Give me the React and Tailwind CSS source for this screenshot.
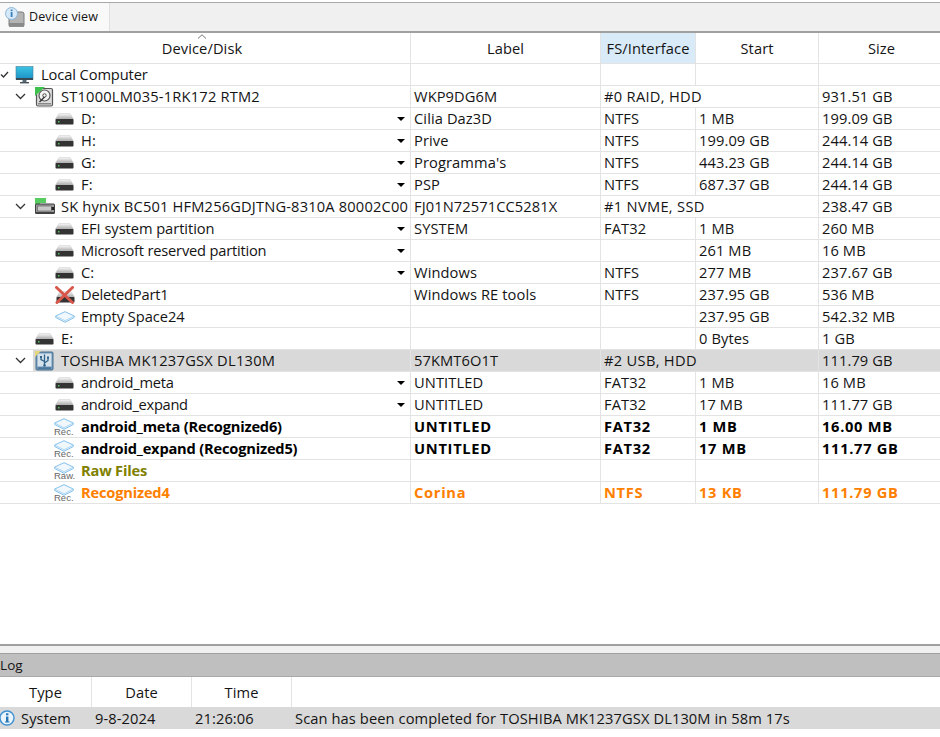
import React from "react";

const Part = () => (
  <svg width="19" height="12" viewBox="0 0 19 12" className="shrink-0">
    <defs>
      <linearGradient id="pt" x1="0" y1="0" x2="0" y2="1"><stop offset="0" stopColor="#fafafa" /><stop offset="1" stopColor="#a8a8a8" /></linearGradient>
    </defs>
    <path d="M4 0.5 H15 L18.5 6 H0.5 Z" fill="url(#pt)" stroke="#c8c8c8" strokeWidth="0.5" />
    <rect x="0.5" y="6" width="18" height="5.5" rx="0.8" fill="#333" />
    <rect x="3" y="8" width="1.5" height="1.5" fill="#4fc25a" />
  </svg>
);

const Monitor = () => (
  <svg width="20" height="18" viewBox="0 0 20 18" className="shrink-0">
    <defs>
      <linearGradient id="mon" x1="0" y1="0" x2="0" y2="1"><stop offset="0" stopColor="#3cc4e4" /><stop offset="1" stopColor="#1a8fc4" /></linearGradient>
    </defs>
    <rect x="1" y="0.5" width="17" height="13" fill="url(#mon)" stroke="#4a7f96" strokeWidth="0.6" />
    <rect x="1" y="12" width="17" height="2" fill="#3a4a55" />
    <rect x="7.5" y="14" width="4" height="2" fill="#5a6a75" />
    <rect x="5" y="16" width="9" height="1.4" fill="#44525c" />
  </svg>
);

const Hdd = () => (
  <svg width="19" height="20" viewBox="0 0 19 20" className="shrink-0">
    <rect x="1.5" y="1.5" width="16" height="17.5" rx="1.5" fill="#dcdcdc" stroke="#555" strokeWidth="1.2" />
    <circle cx="9.5" cy="8.5" r="5.5" fill="#f4f4f4" stroke="#555" strokeWidth="1.2" />
    <circle cx="9.5" cy="8.5" r="1.7" fill="#fff" stroke="#444" />
    <path d="M4.5 15 L9.5 10" stroke="#333" strokeWidth="1.4" />
    <rect x="3" y="16" width="13" height="1.5" fill="#888" />
    <path d="M0 0 H10 L0 9 Z" fill="#3fc24d" />
  </svg>
);

const Ssd = () => (
  <svg width="20" height="18" viewBox="0 0 20 18" className="shrink-0">
    <path d="M0 0 H11 V5 H5 V9 H0 Z" fill="#45c850" opacity="0.9" />
    <rect x="0.5" y="6" width="19" height="9.5" rx="0.6" fill="#9a9a9a" stroke="#3f3f3f" />
    <rect x="2.5" y="8" width="14" height="5" fill="#c8c8c8" stroke="#5c5c5c" strokeWidth="0.6" />
    <rect x="16.5" y="9" width="2.5" height="3" fill="#222" />
    <rect x="0.5" y="14" width="19" height="1.5" fill="#444" />
  </svg>
);

const Usb = () => (
  <svg width="19" height="20" viewBox="0 0 19 20" className="shrink-0">
    <rect x="1" y="1" width="17" height="18" rx="1" fill="#6c97ba" stroke="#4a7090" />
    <rect x="2.5" y="2.5" width="14" height="13" fill="#d5e2ec" />
    <path d="M0 0 H6 L0 6 Z" fill="#e6d67c" />
    <path d="M9.5 3.5 V14 M9.5 10.5 L6 8.5 V6.5 M9.5 12 L13 9.5 V7" fill="none" stroke="#2f6288" strokeWidth="1.3" />
    <rect x="5" y="5" width="2" height="2" fill="#2f6288" />
    <rect x="12" y="5.5" width="2" height="2" fill="#2f6288" />
    <circle cx="9.5" cy="14.5" r="1.3" fill="#2f6288" />
    <rect x="3" y="16.5" width="13" height="1.2" fill="#3f6a8c" />
  </svg>
);

const Rhomb = () => (
  <svg width="20" height="12" viewBox="0 0 20 12" className="shrink-0 block">
    <path d="M10 0.7 L19.3 5 V6.5 L10 11.3 L0.7 6.5 V5 Z" fill="#f0f8fe" stroke="#84c0ea" strokeWidth="1" />
    <path d="M0.7 5 L10 9.7 L19.3 5" fill="none" stroke="#a9d4f0" strokeWidth="0.9" />
  </svg>
);

const Rec = ({ t = "Rec." }) => (
  <div className="relative w-[20px] h-[20px] shrink-0 -ml-[1px] mt-[2px] leading-none">
    <Rhomb />
    <span className="absolute left-0 top-[9px] text-[9.5px] leading-[10px] font-normal tracking-normal text-[#666] font-['Liberation_Sans',sans-serif]">{t}</span>
  </div>
);

const Deleted = () => (
  <div className="relative w-[20px] h-[18px] shrink-0">
    <div className="absolute left-[1px] top-[5px]"><Part /></div>
    <svg width="20" height="18" viewBox="0 0 20 18" className="absolute left-0 top-0">
      <path d="M1.5 1.5 L17.5 16.5 M17.5 1.5 L2 16.5" stroke="#d8574a" strokeWidth="3" strokeLinecap="round" />
    </svg>
  </div>
);

const Chevron = () => (
  <svg width="11" height="7" viewBox="0 0 11 7" className="shrink-0">
    <path d="M1 1 L5.5 5.5 L10 1" fill="none" stroke="#333" strokeWidth="1.3" />
  </svg>
);

const rows = [
  { lvl: 0, icon: <Monitor />, name: "Local Computer", nt: "tracking-[-0.1px]", open: "check", label: "", fs: "", start: "", size: "" },
  { lvl: 1, icon: <Hdd />, name: "ST1000LM035-1RK172 RTM2", nt: "tracking-[0.2px]", open: "v", label: "WKP9DG6M", fs: "#0 RAID, HDD", span: true, size: "931.51 GB" },
  { lvl: 2, icon: <Part />, name: "D:", arrow: true, label: "Cilia Daz3D", fs: "NTFS", start: "1 MB", size: "199.09 GB" },
  { lvl: 2, icon: <Part />, name: "H:", arrow: true, label: "Prive", fs: "NTFS", start: "199.09 GB", size: "244.14 GB" },
  { lvl: 2, icon: <Part />, name: "G:", arrow: true, label: "Programma's", fs: "NTFS", start: "443.23 GB", size: "244.14 GB" },
  { lvl: 2, icon: <Part />, name: "F:", arrow: true, label: "PSP", fs: "NTFS", start: "687.37 GB", size: "244.14 GB" },
  { lvl: 1, icon: <Ssd />, name: "SK hynix BC501 HFM256GDJTNG-8310A 80002C00", nt: "tracking-[0.17px]", open: "v", label: "FJ01N72571CC5281X", fs: "#1 NVME, SSD", span: true, size: "238.47 GB" },
  { lvl: 2, icon: <Part />, name: "EFI system partition", nt: "tracking-[-0.05px]", arrow: true, label: "SYSTEM", fs: "FAT32", start: "1 MB", size: "260 MB" },
  { lvl: 2, icon: <Part />, name: "Microsoft reserved partition", nt: "tracking-[-0.2px]", arrow: true, label: "", fs: "", start: "261 MB", size: "16 MB" },
  { lvl: 2, icon: <Part />, name: "C:", arrow: true, label: "Windows", fs: "NTFS", start: "277 MB", size: "237.67 GB" },
  { lvl: 2, icon: <Deleted />, name: "DeletedPart1", nt: "tracking-[-0.2px]", label: "Windows RE tools", fs: "NTFS", start: "237.95 GB", size: "536 MB" },
  { lvl: 2, icon: <Rhomb />, name: "Empty Space24", nt: "tracking-[-0.05px]", label: "", fs: "", start: "237.95 GB", size: "542.32 MB" },
  { lvl: 1, icon: <Part />, name: "E:", label: "", fs: "", start: "0 Bytes", size: "1 GB" },
  { lvl: 1, icon: <Usb />, name: "TOSHIBA MK1237GSX DL130M", nt: "tracking-[0.25px]", open: "v", label: "57KMT6O1T", fs: "#2 USB, HDD", span: true, size: "111.79 GB", sel: true },
  { lvl: 2, icon: <Part />, name: "android_meta", nt: "tracking-[-0.2px]", arrow: true, label: "UNTITLED", fs: "FAT32", start: "1 MB", size: "16 MB" },
  { lvl: 2, icon: <Part />, name: "android_expand", nt: "tracking-[-0.3px]", arrow: true, label: "UNTITLED", fs: "FAT32", start: "17 MB", size: "111.77 GB" },
  { lvl: 2, icon: <Rec />, name: "android_meta (Recognized6)", b: true, label: "UNTITLED", fs: "FAT32", start: "1 MB", size: "16.00 MB", cls: "text-black" },
  { lvl: 2, icon: <Rec />, name: "android_expand (Recognized5)", b: true, label: "UNTITLED", fs: "FAT32", start: "17 MB", size: "111.77 GB", cls: "text-black" },
  { lvl: 2, icon: <Rec t="Raw." />, name: "Raw Files", b: true, label: "", fs: "", start: "", size: "", cls: "text-[#808000]" },
  { lvl: 2, icon: <Rec />, name: "Recognized4", b: true, label: "Corina", fs: "NTFS", start: "13 KB", size: "111.79 GB", cls: "text-[#ff8000]" },
];

const indent = { 0: "pl-0", 1: "pl-[15px]", 2: "pl-[55px]" };

function Row({ r }) {
  const line = "border-r border-[#e3e3e3]";
  const cell = r.b ? "tracking-[0.7px]" : "";
  return (
    <div className={`flex h-[22px] border-b border-[#e3e3e3] ${r.b ? "font-bold" : ""} ${r.cls || ""}`}>
      <div className={`w-[411px] shrink-0 flex items-center relative overflow-hidden ${line} ${r.lvl === 1 && r.name === "E:" ? "pl-[35px]" : indent[r.lvl]}`}>
        {r.open === "check" && (
          <svg width="9" height="7" viewBox="0 0 9 7" className="shrink-0 mr-[6px]"><path d="M1 3.5 L3.5 6 L8 1" fill="none" stroke="#333" strokeWidth="1.3" /></svg>
        )}
        {r.open === "v" && <div className="w-[20px] shrink-0 flex items-center"><Chevron /></div>}
        {r.sel && <div className="absolute left-[33px] right-0 top-0 bottom-0 bg-[#d9d9d9]" />}
        <div className="relative w-[26px] shrink-0 flex items-center h-[21px]">{r.icon}</div>
        <span className={`whitespace-nowrap relative h-[21px] leading-[21px] ${r.b ? "tracking-[-0.2px]" : r.nt || ""}`}>{r.name}</span>
        {r.arrow && <div className="absolute right-[5px] top-[9px] w-0 h-0 border-l-[4px] border-r-[4px] border-t-[4px] border-l-transparent border-r-transparent border-t-black" />}
      </div>
      <div className={`w-[190px] shrink-0 pl-[3px] leading-[21px] whitespace-nowrap overflow-hidden ${line} ${cell} ${r.sel ? "bg-[#d9d9d9]" : ""}`}>{r.label}</div>
      {r.span ? (
        <div className={`w-[218px] shrink-0 pl-[3px] leading-[21px] whitespace-nowrap tracking-[0.3px] ${line} ${r.sel ? "bg-[#d9d9d9]" : ""}`}>{r.fs}</div>
      ) : (
        <>
          <div className={`w-[95px] shrink-0 pl-[3px] leading-[21px] whitespace-nowrap ${line} ${cell}`}>{r.fs}</div>
          <div className={`w-[123px] shrink-0 pl-[3px] leading-[21px] whitespace-nowrap ${line} ${cell}`}>{r.start}</div>
        </>
      )}
      <div className={`flex-1 pl-[3px] leading-[21px] whitespace-nowrap ${cell} ${r.sel ? "bg-[#d9d9d9]" : ""}`}>{r.size}</div>
    </div>
  );
}

const Head = ({ w, children, cls = "" }) => (
  <div className={`shrink-0 h-full flex items-center justify-center border-r border-[#e3e3e3] ${w} ${cls}`}>{children}</div>
);

export default function App() {
  return (
    <div className="w-[940px] h-[737px] bg-white flex flex-col overflow-hidden text-[14.67px] text-[#141414] font-['Open_Sans',sans-serif] tracking-[0.1px]">
      <div className="h-[29px] shrink-0 bg-[#f0f0f0] border-t-[1px] border-[#a8a8a8] mt-[2px] flex">
        <div className="w-[110px] h-[28px] bg-[#f9f9f9] border-r border-[#e0e0e0] flex items-center pl-[5px] gap-[4px] text-[12.5px]">
          <div className="relative w-[20px] h-[20px] shrink-0">
            <svg width="20" height="20" viewBox="0 0 20 20">
              <rect x="4" y="5" width="15" height="15" rx="2" fill="#b4b4b4" stroke="#7d7d7d" />
              <rect x="4" y="16" width="15" height="3.5" fill="#8a8a8a" />
              <circle cx="6.5" cy="6.5" r="6" fill="#d5e9f8" stroke="#8fb5d6" />
              <rect x="5.7" y="5" width="1.8" height="5" fill="#3a7fb8" />
              <rect x="5.7" y="2.5" width="1.8" height="1.6" fill="#3a7fb8" />
            </svg>
          </div>
          <span>Device view</span>
        </div>
      </div>
      <div className="h-[2px] shrink-0 bg-[#a0a0a0]" />
      <div className="h-[31px] shrink-0 flex border-b border-[#e3e3e3] relative">
        <Head w="w-[411px]" cls="pr-[6px]">Device/Disk</Head>
        <svg width="10" height="5" viewBox="0 0 10 5" className="absolute left-[197px] top-[1px]"><path d="M1 4.5 L5 0.8 L9 4.5" fill="none" stroke="#777" /></svg>
        <Head w="w-[190px]">Label</Head>
        <Head w="w-[95px]" cls="bg-[#d9ebf9]">FS/Interface</Head>
        <Head w="w-[123px]">Start</Head>
        <div className="flex-1 flex items-center justify-center pl-[4px]">Size</div>
      </div>
      <div className="flex-1 min-h-0">
        {rows.map((r, i) => <Row key={i} r={r} />)}
      </div>
      <div className="h-[2px] shrink-0 bg-[#a0a0a0]" />
      <div className="h-[7px] shrink-0 bg-[#f0f0f0]" />
      <div className="h-[24px] shrink-0 bg-[#bfbfbf] border-t border-[#a0a0a0] border-b-[1px] border-b-[#a8a8a8] leading-[23px] text-[13.5px] overflow-hidden">Log</div>
      <div className="h-[30px] shrink-0 flex">
        <Head w="w-[92px]">Type</Head>
        <Head w="w-[100px]">Date</Head>
        <Head w="w-[100px]">Time</Head>
      </div>
      <div className="h-[22px] shrink-0 bg-[#d9d9d9] flex items-center">
        <div className="w-[21px] shrink-0 flex items-center">
          <svg width="16" height="16" viewBox="0 0 16 16" className="-ml-[1px]">
            <circle cx="8" cy="8" r="7" fill="#eaf4fc" stroke="#3f92d2" strokeWidth="1.4" />
            <rect x="7" y="6.5" width="2.4" height="5.5" fill="#2a76b5" />
            <rect x="7" y="3.3" width="2.4" height="2" fill="#2a76b5" />
            <rect x="6" y="11.5" width="4.4" height="1" fill="#2a76b5" />
          </svg>
        </div>
        <span className="w-[74px] shrink-0">System</span>
        <span className="w-[100px] shrink-0">9-8-2024</span>
        <span className="w-[100px] shrink-0">21:26:06</span>
        <span className="whitespace-nowrap">Scan has been completed for TOSHIBA MK1237GSX DL130M in 58m 17s</span>
      </div>
      <div className="h-[8px] shrink-0" />
    </div>
  );
}
